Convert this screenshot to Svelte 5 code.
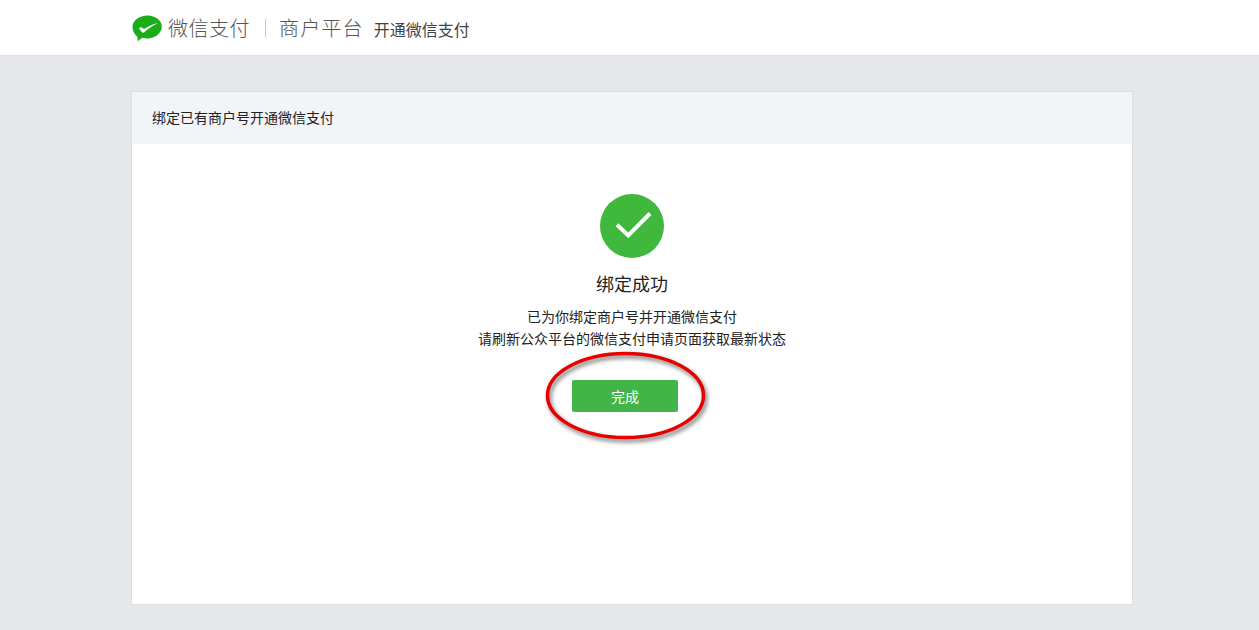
<script>
  const title = '绑定已有商户号开通微信支付';
</script>

<div class="page">
  <header class="topbar">
    <div class="topbar-inner">
      <svg class="logo" viewBox="0 0 30 28" width="30" height="28" aria-hidden="true">
        <path d="M15.500 1.500C23.500 1.500 29.800 6.500 29.800 12.500 29.800 19 23 24.500 15.500 24.500 13.500 24.500 11.800 24.200 10.200 23.700L5.800 27.300 5.300 22.800C2.500 20.500 .5 17 .5 12.800 .5 6.500 7.500 1.500 15.500 1.500z" fill="#1aad19"/>
        <path d="M7 14.500L9 13 12 15C16 12.500 21 10 26 9 21 11.500 16 14.500 12.500 18 11.500 19 10.500 19 9.800 18z" fill="#fff"/>
      </svg>
      <span class="brand">微信支付</span>
      <span class="divider"></span>
      <span class="brand sub">商户平台</span>
      <span class="page-name">开通微信支付</span>
    </div>
  </header>

  <main class="card">
    <div class="card-head">{title}</div>
    <div class="card-body">
      <svg class="ok" viewBox="0 0 64 64" width="64" height="64" aria-hidden="true">
        <circle cx="32" cy="32" r="32" fill="#3fb83c"/>
        <path d="M17 30.700L28.300 41.500 50 19.500" fill="none" stroke="#fff" stroke-width="4"/>
      </svg>
      <h2>绑定成功</h2>
      <p>已为你绑定商户号并开通微信支付</p>
      <p>请刷新公众平台的微信支付申请页面获取最新状态</p>
      <div class="action">
        <button type="button">完成</button>
        <svg class="mark" viewBox="0 0 170 96" width="170" height="96" aria-hidden="true">
          <ellipse cx="79.500" cy="43.500" rx="78" ry="42" fill="none" stroke="#e80000" stroke-width="3.500"/>
        </svg>
      </div>
    </div>
  </main>
</div>

<style>
  :global(body) {
    margin: 0;
    background: #e6e7eb;
    font-family: "Liberation Sans", "Noto Sans CJK SC", sans-serif;
  }

  .page {
    height: 630px;
    overflow: hidden;
  }

  .topbar {
    height: 55px;
    background: #fff;
    border-bottom: 1px solid #dcdde0;
  }

  .topbar-inner {
    display: flex;
    align-items: center;
    height: 100%;
    padding-left: 132px;
  }

  .logo {
    margin-right: 6px;
  }

  .brand {
    font-size: 20px;
    letter-spacing: 0.5px;
    color: #555;
    font-weight: 300;
  }

  .brand.sub {
    margin-left: -1px;
    letter-spacing: 1.2px;
  }

  .divider {
    width: 1px;
    height: 18px;
    background: #c9c9c9;
    margin: 0 14px 0 15px;
  }

  .page-name {
    margin: 2px 0 0 10px;
    font-size: 16px;
    color: #444;
  }

  .card {
    margin: 35px 0 0 131px;
    width: 1000px;
    height: 512px;
    background: #fff;
    border: 1px solid #dcdde0;
  }

  .card-head {
    height: 52px;
    line-height: 52px;
    padding-left: 20px;
    background: #f3f4f8;
    font-size: 14px;
    color: #222;
  }

  .card-body {
    display: flex;
    flex-direction: column;
    align-items: center;
    padding-top: 50px;
  }

  h2 {
    margin: 14px 0 8px;
    font-size: 18px;
    line-height: 26px;
    font-weight: 400;
    color: #222;
  }

  p {
    margin: 0;
    font-size: 14px;
    line-height: 22px;
    color: #222;
  }

  .action {
    position: relative;
    margin: 30px 14px 0 0;
  }

  button {
    display: block;
    width: 106px;
    height: 32px;
    padding: 0;
    border: 0;
    border-radius: 2px;
    background: #43b548;
    color: #fff;
    font: inherit;
    font-size: 14px;
  }

  .mark {
    position: absolute;
    left: -26px;
    top: -28px;
    overflow: visible;
    pointer-events: none;
    filter: drop-shadow(2px 3px 2px rgba(0, 0, 0, 0.55));
  }
</style>
